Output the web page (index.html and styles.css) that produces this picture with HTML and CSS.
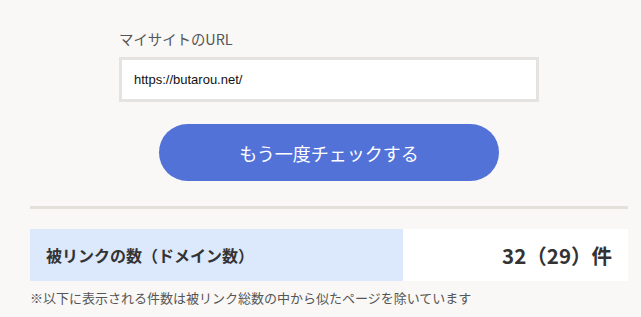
FILE: index.html
```html
<!DOCTYPE html>
<html lang="ja">
<head>
  <meta charset="UTF-8" />
  <meta name="viewport" content="width=device-width, initial-scale=1.0"/>
  <title>被リンクチェック</title>
  <link rel="stylesheet" href="styles.css">
</head>
<body>
  <main class="page">
    <form class="check-form">
      <label class="field-label" for="site-url">マイサイトのURL</label>
      <input class="url-input" type="text" id="site-url" value="https://butarou.net/" />
      <button class="check-btn" type="submit">もう一度チェックする</button>
    </form>

    <hr class="divider">

    <div class="result-row">
      <div class="result-label">被リンクの数（ドメイン数）</div>
      <div class="result-value">32（29）件</div>
    </div>
    <p class="note">※以下に表示される件数は被リンク総数の中から似たページを除いています</p>
  </main>
</body>
</html>
```

FILE: styles.css
```css
body {
  margin: 0;
  background: #f9f8f6;
  color: #444;
  font-family: "Noto Sans CJK JP", "Noto Sans", sans-serif;
}
.page {
  width: 598px;
  margin-left: 30px;
}
.check-form {
  width: 420px;
  margin: 0 auto;
  padding-top: 29px;
  display: flex;
  flex-direction: column;
}
.field-label {
  font-size: 14.4px;
  line-height: 20px;
  color: #555;
  margin-bottom: 8px;
}
.url-input {
  box-sizing: border-box;
  width: 420px;
  height: 45px;
  border: 3px solid #e4e3e2;
  background: #fff;
  padding: 0 12px;
  font-family: "Liberation Sans", Arial, sans-serif;
  font-size: 13px;
  color: #111;
  outline: none;
}
.check-btn {
  align-self: center;
  width: 340px;
  height: 57px;
  margin-top: 22px;
  border: none;
  border-radius: 29px;
  background: #5272d8;
  color: #fff;
  font-family: "Noto Sans CJK JP", sans-serif;
  font-size: 18px;
  cursor: pointer;
}
.divider {
  margin: 25px 0 0;
  height: 3px;
  border: none;
  background: #e3e1d9;
}
.result-row {
  display: flex;
  margin-top: 20px;
  height: 52px;
}
.result-label {
  width: 373px;
  background: #dce8fb;
  display: flex;
  align-items: center;
  padding-left: 16px;
  box-sizing: border-box;
  font-size: 16px;
  font-weight: bold;
  color: #333;
}
.result-value {
  flex: 1;
  background: #fff;
  display: flex;
  align-items: center;
  justify-content: flex-end;
  padding-right: 16px;
  font-size: 20.5px;
  font-weight: bold;
  color: #333;
}
.note {
  margin: 8px 0 0;
  font-size: 13px;
  line-height: 18px;
  color: #555;
}
```
